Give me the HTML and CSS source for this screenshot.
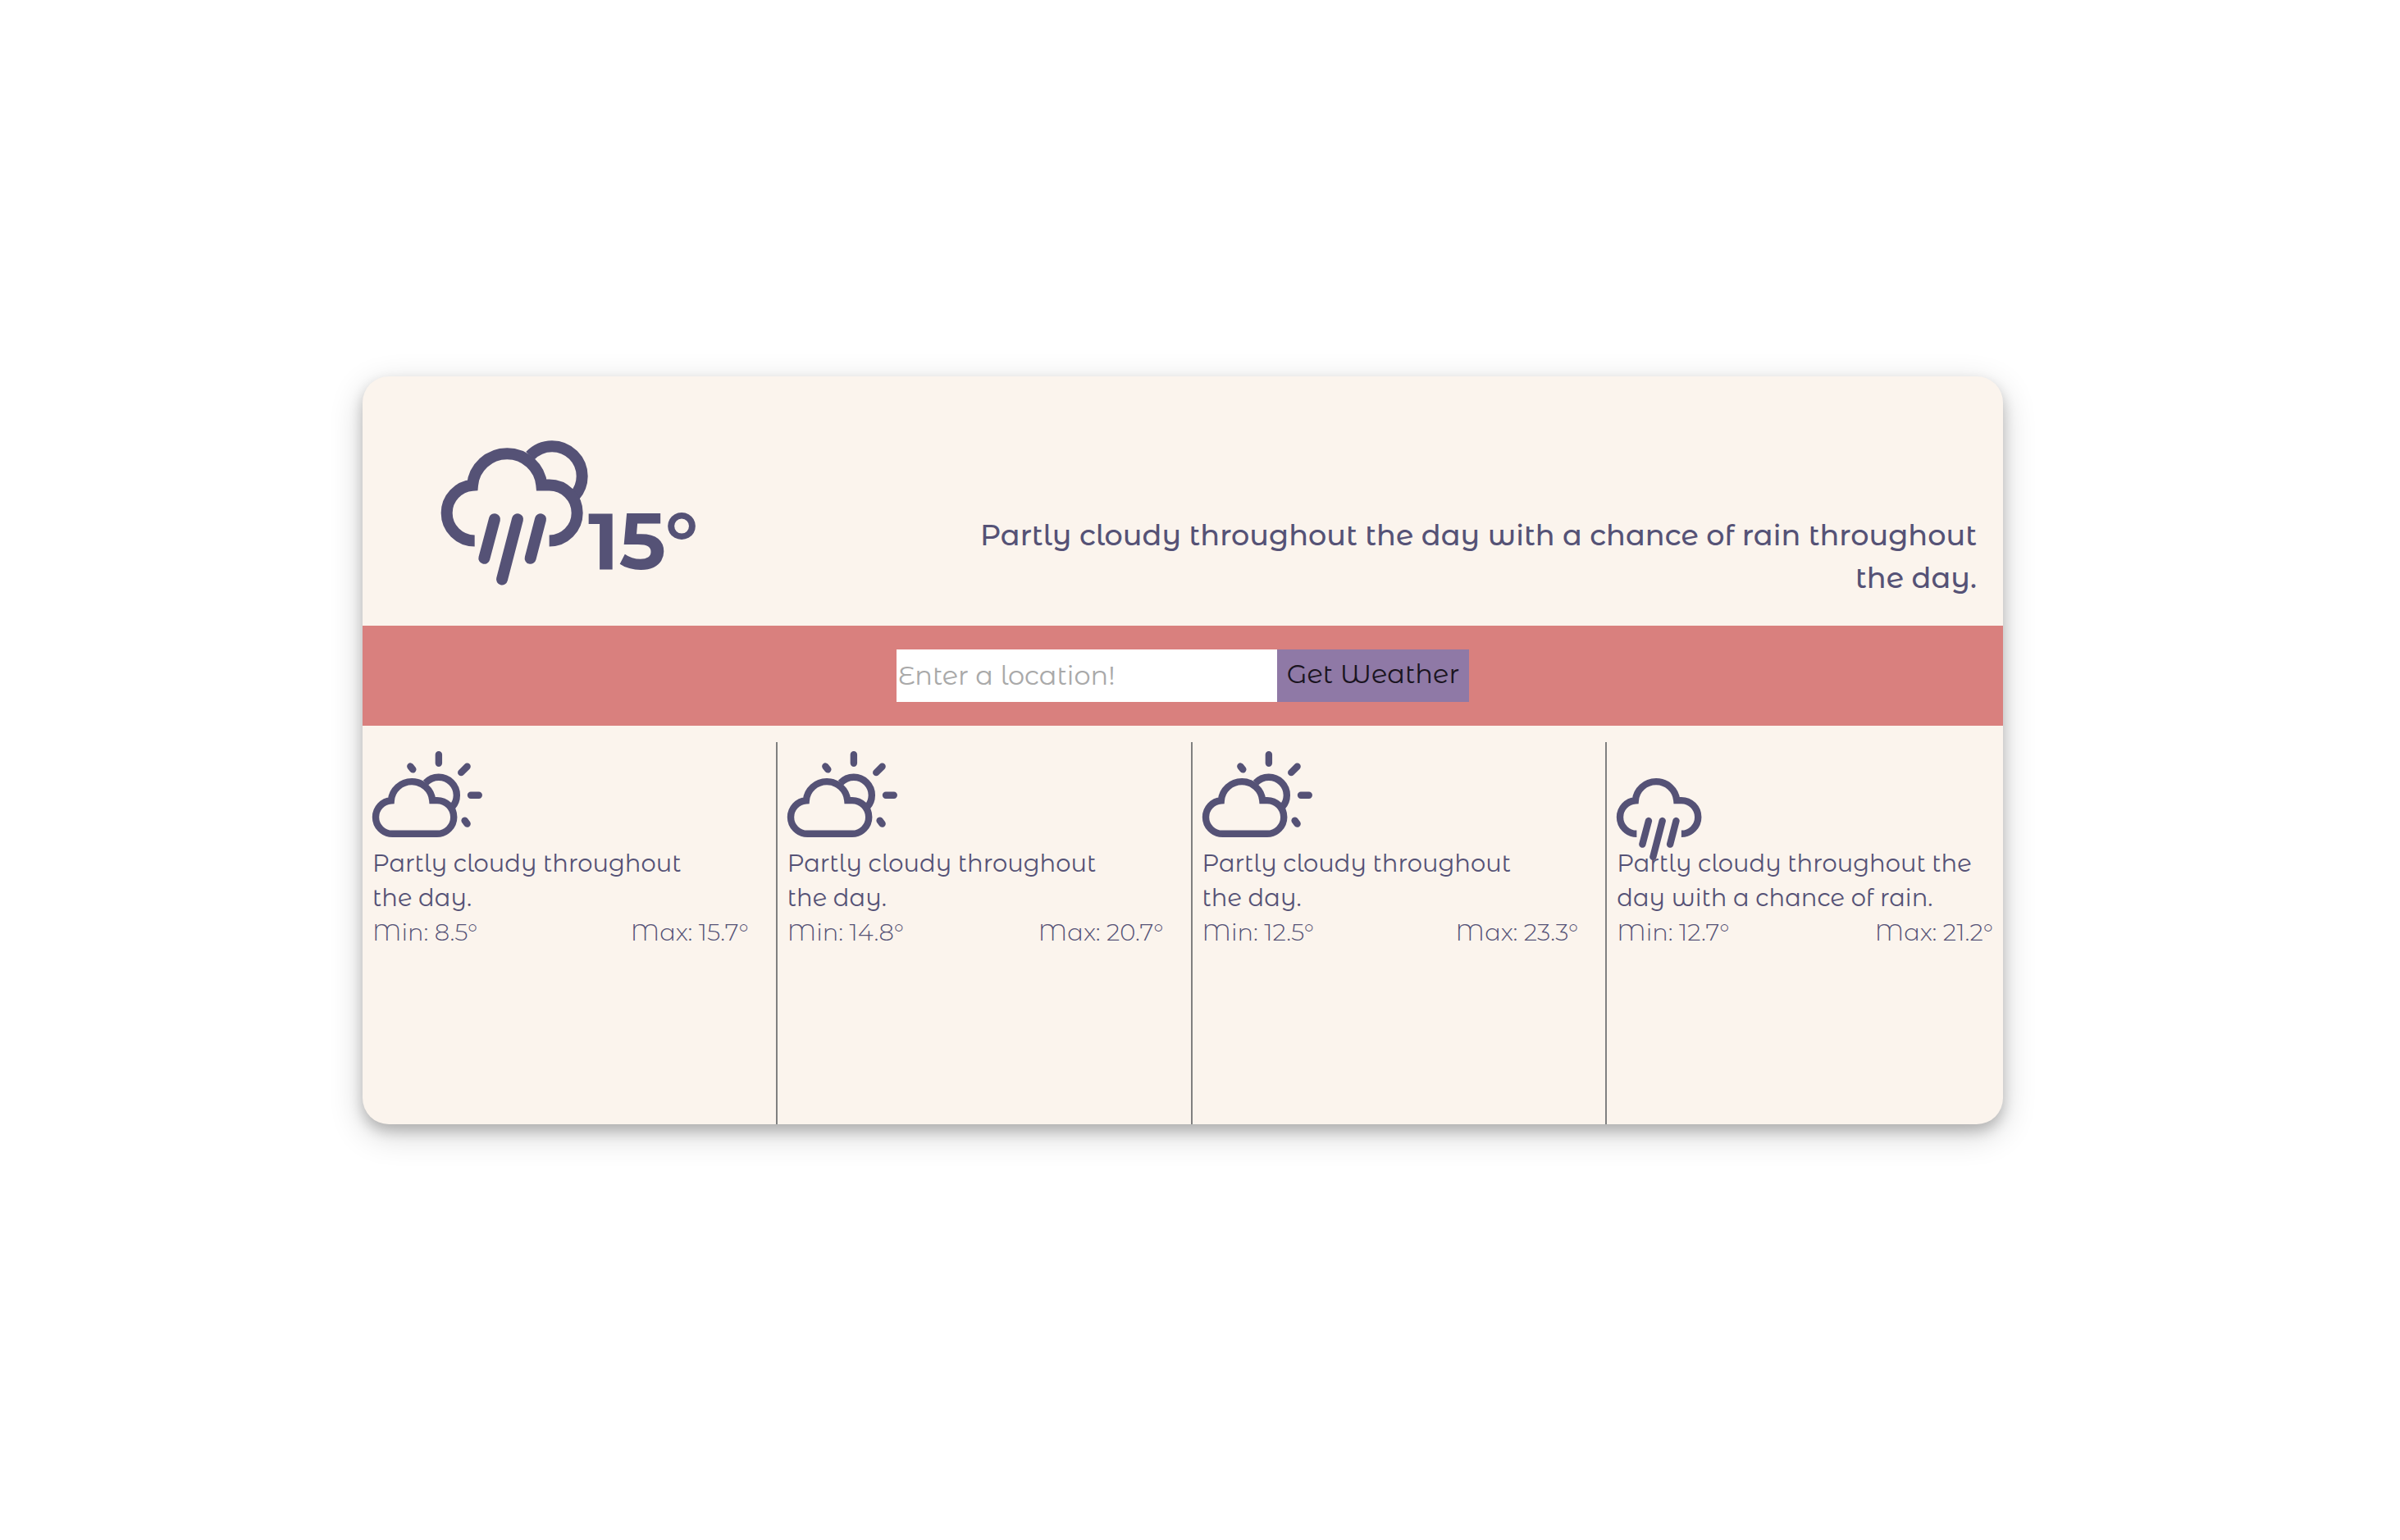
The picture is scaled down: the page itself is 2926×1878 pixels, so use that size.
FILE: index.html
```html
<!DOCTYPE html>
<html lang="en">
<head>
<meta charset="utf-8">
<meta name="viewport" content="width=device-width, initial-scale=1">
<title>Weather</title>
<link rel="stylesheet" href="styles.css">
</head>
<body>
<svg class="sprite" aria-hidden="true">
  <symbol id="rain" overflow="visible">
    <path d="M237 480A102 102 0 0 1 135 378A102 102 0 0 1 229 277A127 127 0 0 1 356 161A127 127 0 0 1 482 276H510A102 102 0 0 1 510 480"/>
    <path class="round" d="M310 401L272 544M394 401L337 621M478 401L441 544"/>
  </symbol>
  <symbol id="sun-disc" overflow="visible">
    <path d="M440 169A110 110 0 0 1 520 134A110 110 0 0 1 630 244A110 110 0 0 1 602 317"/>
  </symbol>
  <symbol id="partly" overflow="visible">
    <path d="M237 480A102 102 0 0 1 135 378A102 102 0 0 1 229 277A127 127 0 0 1 356 161A127 127 0 0 1 482 276H510A102 102 0 0 1 510 480Z"/>
    <path class="round" d="M520 -4V49M694 69L657 106M716 244H765M679 399L694 419M347 68L362 87"/>
  </symbol>
</svg>
<main class="card">
  <header class="current">
    <div class="now">
      <svg class="icon icon-large" viewBox="115 113 537 530" role="img" aria-label="Rain"><use href="#sun-disc"/><use href="#rain"/></svg>
      <span class="temperature">15°</span>
    </div>
    <p class="summary">Partly cloudy throughout the day with a chance of rain throughout the day.</p>
  </header>
  <form class="search">
    <input class="location" type="text" placeholder="Enter a location!" aria-label="Location">
    <button class="submit" type="button">Get Weather</button>
  </form>
  <section class="forecast">
    <article class="day">
      <svg class="icon icon-small" viewBox="115 -25 671 526" role="img" aria-label="Partly cloudy"><use href="#sun-disc"/><use href="#partly"/></svg>
      <p class="text">Partly cloudy throughout the day.</p>
      <div class="range"><span>Min: 8.5°</span><span>Max: 15.7°</span></div>
    </article>
    <article class="day">
      <svg class="icon icon-small" viewBox="115 -25 671 526" role="img" aria-label="Partly cloudy"><use href="#sun-disc"/><use href="#partly"/></svg>
      <p class="text">Partly cloudy throughout the day.</p>
      <div class="range"><span>Min: 14.8°</span><span>Max: 20.7°</span></div>
    </article>
    <article class="day">
      <svg class="icon icon-small" viewBox="115 -25 671 526" role="img" aria-label="Partly cloudy"><use href="#sun-disc"/><use href="#partly"/></svg>
      <p class="text">Partly cloudy throughout the day.</p>
      <div class="range"><span>Min: 12.5°</span><span>Max: 23.3°</span></div>
    </article>
    <article class="day">
      <svg class="icon icon-small" viewBox="115 -25 671 526" role="img" aria-label="Rain"><use href="#rain"/></svg>
      <p class="text">Partly cloudy throughout the day with a chance of rain.</p>
      <div class="range"><span>Min: 12.7°</span><span>Max: 21.2°</span></div>
    </article>
  </section>
</main>
</body>
</html>
```
FILE: styles.css
```css
body {
  margin: 0;
  box-sizing: border-box;
  min-height: 100vh;
  padding: 0 42px 48px 0;
  display: flex;
  align-items: center;
  justify-content: center;
  background: #fff;
  color: #555276;
  font-family: "Montserrat Alternates", Montserrat, Inter, sans-serif;
}

p {
  margin: 0;
}

.sprite {
  position: absolute;
  width: 0;
  height: 0;
}

.card {
  width: 90%;
  max-width: 2000px;
  background: #fbf4ed;
  border-radius: 32px;
  box-shadow: 0 8px 16px rgba(0, 0, 0, .2), 0 12px 40px rgba(0, 0, 0, .19);
}

.current {
  display: flex;
  align-items: flex-end;
  justify-content: space-between;
  padding: 78px 32px 32px 96px;
}

.now {
  display: flex;
  align-items: flex-end;
  padding-bottom: 17px;
}

.icon {
  display: block;
  overflow: visible;
  fill: none;
  stroke: currentColor;
  stroke-width: 42;
}

.round {
  stroke-linecap: round;
}

.icon-large {
  width: 179px;
  height: 177px;
}

.temperature {
  font-size: 96px;
  font-weight: 700;
  line-height: 108px;
}

.summary {
  width: 67%;
  font-size: 35px;
  font-weight: 500;
  line-height: 52px;
  text-align: right;
}

.search {
  display: flex;
  justify-content: center;
  padding: 29px;
  background: #d9807e;
}

.location,
.submit {
  box-sizing: border-box;
  height: 64px;
  margin: 0;
  border: 0;
  border-radius: 0;
  font: inherit;
  font-size: 32px;
}

.location {
  width: 464px;
  padding: 0 2px 2px;
  background: #fff;
  color: #555276;
}

.location::placeholder {
  color: #a9a9a9;
  opacity: 1;
}

.submit {
  width: 234px;
  padding: 0 0 6px;
  background: #8f79a6;
  color: #1a1420;
  white-space: nowrap;
}

.forecast {
  display: flex;
  padding-top: 20px;
}

.day {
  flex: 1 1 0;
  min-width: 0;
  min-height: 455px;
  padding: 11px 33px 0 12px;
  border-right: 2px solid #808080;
}

.day:last-child {
  padding-right: 12px;
  border-right: 0;
}

.icon-small {
  width: 134px;
  height: 105px;
  margin-bottom: 11px;
}

.text,
.range {
  font-size: 29px;
  line-height: 42px;
}

.text {
  padding-right: 28px;
  font-weight: 400;
}

.day:last-child .text {
  padding-right: 0;
}

.range {
  display: flex;
  justify-content: space-between;
  font-weight: 300;
}
```
